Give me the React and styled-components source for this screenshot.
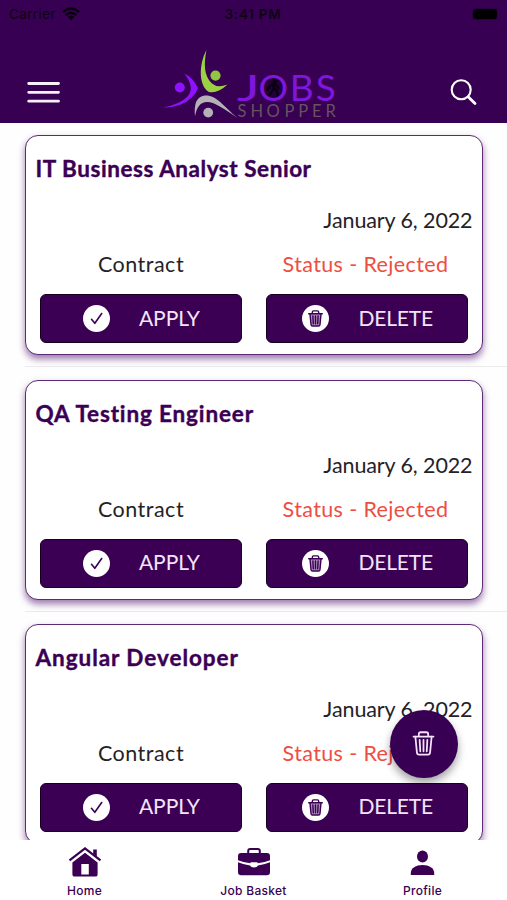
import React from "react";
import styled, { createGlobalStyle } from "styled-components";

const purple = "#3b0054";

const GlobalStyle = createGlobalStyle`
  * { box-sizing: border-box; }
  body { margin: 0; background: #fff; font-family: Lato, "Open Sans", sans-serif; }
`;

const Screen = styled.div`
  position: relative;
  width: 507px;
  height: 900px;
  overflow: hidden;
  display: flex;
  flex-direction: column;
  background: #fefefe;
`;

const Header = styled.header`
  height: 123px;
  flex: none;
  background: #380052;
  display: flex;
  flex-direction: column;
`;

const StatusBar = styled.div`
  height: 28px;
  padding: 0 10px 0 9px;
  display: grid;
  grid-template-columns: 1fr auto 1fr;
  align-items: center;
  font: 400 13.5px/28px Inter, sans-serif;
  letter-spacing: 0.35px;
  color: #0d0314;
`;

const Carrier = styled.span`
  display: flex;
  align-items: center;
  gap: 6px;
`;

const Clock = styled.span`
  font-weight: 600;
  letter-spacing: 0.75px;
`;

const Battery = styled.span`
  justify-self: end;
  width: 24px;
  height: 10px;
  border-radius: 3px;
  background: #000;
  box-shadow: 0 0 2px #12001c;
`;

const Toolbar = styled.div`
  flex: 1;
  display: flex;
  justify-content: space-between;
  padding: 0 29px 0 27px;
`;

const IconButton = styled.button`
  border: 0;
  padding: 0;
  height: 33px;
  margin-top: 48px;
  background: none;
  display: flex;
`;

const LogoMark = styled.svg`
  display: block;
  overflow: visible;
  margin: 17px -2px 0 -8px;
`;

const List = styled.main`
  height: 717px;
  flex: none;
  overflow: hidden;
`;

const Row = styled.div`
  height: 244.3px;
  padding: 12.4px 24.5px 0 25px;
  background: linear-gradient(#ebebed, #ebebed) 25px 100% / 100% 1px no-repeat;
`;

const Card = styled.article`
  height: 220px;
  padding: 0 9.5px;
  background: #fff;
  border: 1.5px solid #5d2b76;
  border-radius: 13px;
  box-shadow: 0 4px 7px rgba(74, 12, 105, 0.55);
`;

const Title = styled.h2`
  margin: 0;
  padding-top: 19px;
  height: 71px;
  font-size: 22.5px;
  line-height: 28px;
  font-weight: 700;
  color: ${purple};
  -webkit-text-stroke: 0.4px ${purple};
  letter-spacing: ${(p) => p.$spacing}px;
`;

const PostedDate = styled.div`
  height: 28px;
  text-align: right;
  font-size: 21.5px;
  line-height: 26px;
  color: #242226;
  letter-spacing: -0.1px;
  margin-right: -0.5px;
`;

const Facts = styled.div`
  display: grid;
  grid-template-columns: 202px 202px;
  gap: 24px;
  margin: 15px 0 0 4px;
  height: 28px;
  text-align: center;
  font-size: 21.5px;
  line-height: 28px;
`;

const Contract = styled.span`
  color: #242226;
  letter-spacing: 0.5px;
  margin-left: 1px;
`;

const Status = styled.span`
  color: #ee4e42;
  letter-spacing: 0.38px;
  margin-left: -2px;
`;

const Actions = styled.div`
  display: grid;
  grid-template-columns: 202px 202px;
  gap: 24px;
  margin: 16px 0 0 4px;
`;

const ActionButton = styled.button`
  height: 49px;
  display: flex;
  align-items: center;
  gap: ${(p) => p.$gap}px;
  padding: 0 0 0 ${(p) => p.$inset}px;
  border: 1.5px solid #160020;
  border-radius: 6px;
  background: ${purple};
  color: #f3e5f8;
  font: 400 21px/28px Lato, sans-serif;
  letter-spacing: ${(p) => p.$spacing}px;
`;

const ActionLabel = styled.span`
  padding-bottom: 2px;
`;

const Disc = styled.span`
  width: 27px;
  height: 27px;
  border-radius: 50%;
  background: #fff;
  color: ${purple};
  display: grid;
  place-items: center;
`;

const TabBar = styled.nav`
  flex: 1;
  display: grid;
  grid-template-columns: repeat(3, 1fr);
  background: #fff;
`;

const Tab = styled.a`
  display: flex;
  flex-direction: column;
  align-items: center;
  padding-top: 5px;
  gap: 5px;
  color: ${purple};
  font: 500 12px/16px Inter, sans-serif;
  letter-spacing: 0.3px;
`;

const Fab = styled.button`
  position: absolute;
  right: 49px;
  bottom: 122.5px;
  width: 68px;
  height: 68px;
  border: 0;
  padding: 0 1px 0 0;
  border-radius: 50%;
  background: #380052;
  color: #f5e2fb;
  display: grid;
  place-items: center;
  box-shadow: 0 5px 9px rgba(0, 0, 0, 0.36);
`;

const Wifi = () => (
  <svg width="18" height="14" viewBox="0 0 18 14" fill="none" stroke="#08000d" strokeWidth="2.3">
    <path d="M1 5.1Q9-2.2 17 5.1M3.8 8Q9 3.6 14.2 8" />
    <path d="M5.8 9.8Q9 7.2 12.2 9.8L9 13.2Z" fill="#08000d" stroke="none" />
  </svg>
);

const Menu = () => (
  <svg width="33" height="33" viewBox="0 0 33 33" stroke="#f7effa" strokeWidth="2.8" strokeLinecap="round">
    <path d="M1.7 7.5h29.8M1.7 16.3h29.8M1.7 25.2h29.8" />
  </svg>
);

const Search = () => (
  <svg width="28" height="33" viewBox="0 0 28 33" fill="none" stroke="#fff" strokeLinecap="round">
    <circle cx="11.2" cy="13.7" r="9.5" strokeWidth="2.1" />
    <path d="M18.4 20.9l6.6 6.6" strokeWidth="2.8" />
  </svg>
);

const Logo = () => (
  <LogoMark width="180" height="74" viewBox="162 45 180 74">
    <path d="M206.4 50C198.6 65 198.6 86 209 92Q217.5 94 227.5 84.5Q217.5 88.3 212 83.5C203.8 76 203.8 64 206.4 50Z" fill="#9bd044" />
    <circle cx="215.5" cy="75.6" r="5.1" fill="#91c640" />
    <path d="M184.4 73.5Q193 77.5 198 88Q196.5 93 192 97.2Q182 107.5 162.5 107.8Q181 104 188 96C192.5 90 192 84 184.4 73.5Z" fill="#8f12ff" />
    <circle cx="179.8" cy="87.5" r="5" fill="#8f12ff" />
    <path d="M195 116.5Q193 97 204.5 95.5C216 94.5 223 105.5 237.5 118Q223 107.5 213.5 103.2C203 99.5 197 104 195 116.5Z" fill="#b5b1b8" />
    <circle cx="208.2" cy="112.6" r="4.9" fill="#b5b1b8" />
    <circle cx="273.5" cy="88" r="11.5" fill="#240038" />
    <g fill="#080010" stroke="#080010" strokeLinecap="round">
      <circle cx="275.2" cy="80.5" r="1.9" />
      <path d="M273.5 83v6l-4 6.5M274 88l3 3 .8 5.5M273 84l-4 3-1.5 3M275 84l3.5 4" fill="none" strokeWidth="2" />
    </g>
    <text x="236.7" y="100.5" textLength="23" lengthAdjust="spacingAndGlyphs" fontFamily="Lato" fontSize="37" fill="#7f16dc">J</text>
    <text x="258.5 289.7 315.8" y="100.5" fontFamily="Lato" fontSize="37" fill="#7f16dc">OBS</text>
    <text x="237.5 250.5 266.5 284.5 298.2 312 325.5" y="117" fontFamily="Lato" fontSize="16.5" fill="#66545f">SHOPPER</text>
  </LogoMark>
);

const Check = () => (
  <svg width="15" height="15" viewBox="0 0 15 15" fill="none" stroke="currentColor" strokeWidth="1.6" strokeLinecap="round" strokeLinejoin="round">
    <path d="M2.5 8.3l3.3 4L12.7 2.5" />
  </svg>
);

const Trash = ({ size, stroke, tint }) => (
  <svg width={size} height={size} viewBox="0 0 24 24" fill="none" stroke="currentColor" strokeWidth={stroke} strokeLinecap="round" strokeLinejoin="round">
    <path d="M4.2 5.5l1.5 15.3q.2 1.9 2 1.9h8.6q1.8 0 2-1.9L19.8 5.5" fill={tint || "none"} />
    <path d="M2.4 5.3h19.2M7.5 5V3q0-1.8 1.8-1.8h5.4q1.8 0 1.8 1.8v2M8.3 8.5l.6 11M12 8.5v11M15.7 8.5l-.6 11" />
  </svg>
);

const Home = () => (
  <svg width="34" height="33" viewBox="0 0 34 33" fill="currentColor">
    <path d="M25.2 4.5h3.6v8l-3.6-3.2z" />
    <path d="M1.5 15.3L17 3.3l15.5 12" fill="none" stroke="currentColor" strokeWidth="2.2" />
    <path fillRule="evenodd" d="M17 7.7l12.6 9.7v12q0 2.2-2.2 2.2H6.6q-2.2 0-2.2-2.2v-12zM13.3 19v10.5h7.5V19z" />
  </svg>
);

const Basket = () => (
  <svg width="34" height="33" viewBox="0 0 34 33" fill="currentColor">
    <path d="M11.2 8V6q0-2 2-2h7.6q2 0 2 2v2" fill="none" stroke="currentColor" strokeWidth="2" />
    <path d="M4 8h26q3 0 3 3v4.2q-7 2.8-12.5 3.1v-1h-7v1Q8 18 1 15.2V11q0-3 3-3z" />
    <path d="M1 17.3q6.5 2.7 12 3.1 1 2 4 2t4-2q5.5-.4 12-3.1V27q0 3.2-3.2 3.2H4.2Q1 30.2 1 27z" />
  </svg>
);

const Person = () => (
  <svg width="34" height="33" viewBox="0 0 34 33" fill="currentColor">
    <ellipse cx="16.5" cy="11.6" rx="5.5" ry="6" />
    <path d="M4.8 30V28c0-5 5.2-8 11.7-8s11.7 3 11.7 8v2z" />
  </svg>
);

const jobs = [
  { title: "IT Business Analyst Senior", spacing: 0.55 },
  { title: "QA Testing Engineer", spacing: 0.85 },
  { title: "Angular Developer", spacing: 0.95 },
];

const JobCard = ({ job }) => (
  <Row>
    <Card>
      <Title $spacing={job.spacing}>{job.title}</Title>
      <PostedDate>January 6, 2022</PostedDate>
      <Facts>
        <Contract>Contract</Contract>
        <Status>Status - Rejected</Status>
      </Facts>
      <Actions>
        <ActionButton $inset={42} $gap={29.5} $spacing={-0.1}>
          <Disc><Check /></Disc><ActionLabel>APPLY</ActionLabel>
        </ActionButton>
        <ActionButton $inset={35.5} $gap={29.5} $spacing={-0.2}>
          <Disc><Trash size={17} stroke={2} tint="#ab8eba" /></Disc><ActionLabel>DELETE</ActionLabel>
        </ActionButton>
      </Actions>
    </Card>
  </Row>
);

export default function App() {
  return (
    <Screen>
      <GlobalStyle />
      <Header>
        <StatusBar>
          <Carrier>Carrier <Wifi /></Carrier>
          <Clock>3:41 PM</Clock>
          <Battery />
        </StatusBar>
        <Toolbar>
          <IconButton aria-label="Menu"><Menu /></IconButton>
          <Logo />
          <IconButton aria-label="Search"><Search /></IconButton>
        </Toolbar>
      </Header>
      <List>
        {jobs.map((job) => <JobCard key={job.title} job={job} />)}
      </List>
      <TabBar>
        <Tab><Home />Home</Tab>
        <Tab><Basket />Job Basket</Tab>
        <Tab><Person />Profile</Tab>
      </TabBar>
      <Fab aria-label="Delete all"><Trash size={25} stroke={1.7} /></Fab>
    </Screen>
  );
}
